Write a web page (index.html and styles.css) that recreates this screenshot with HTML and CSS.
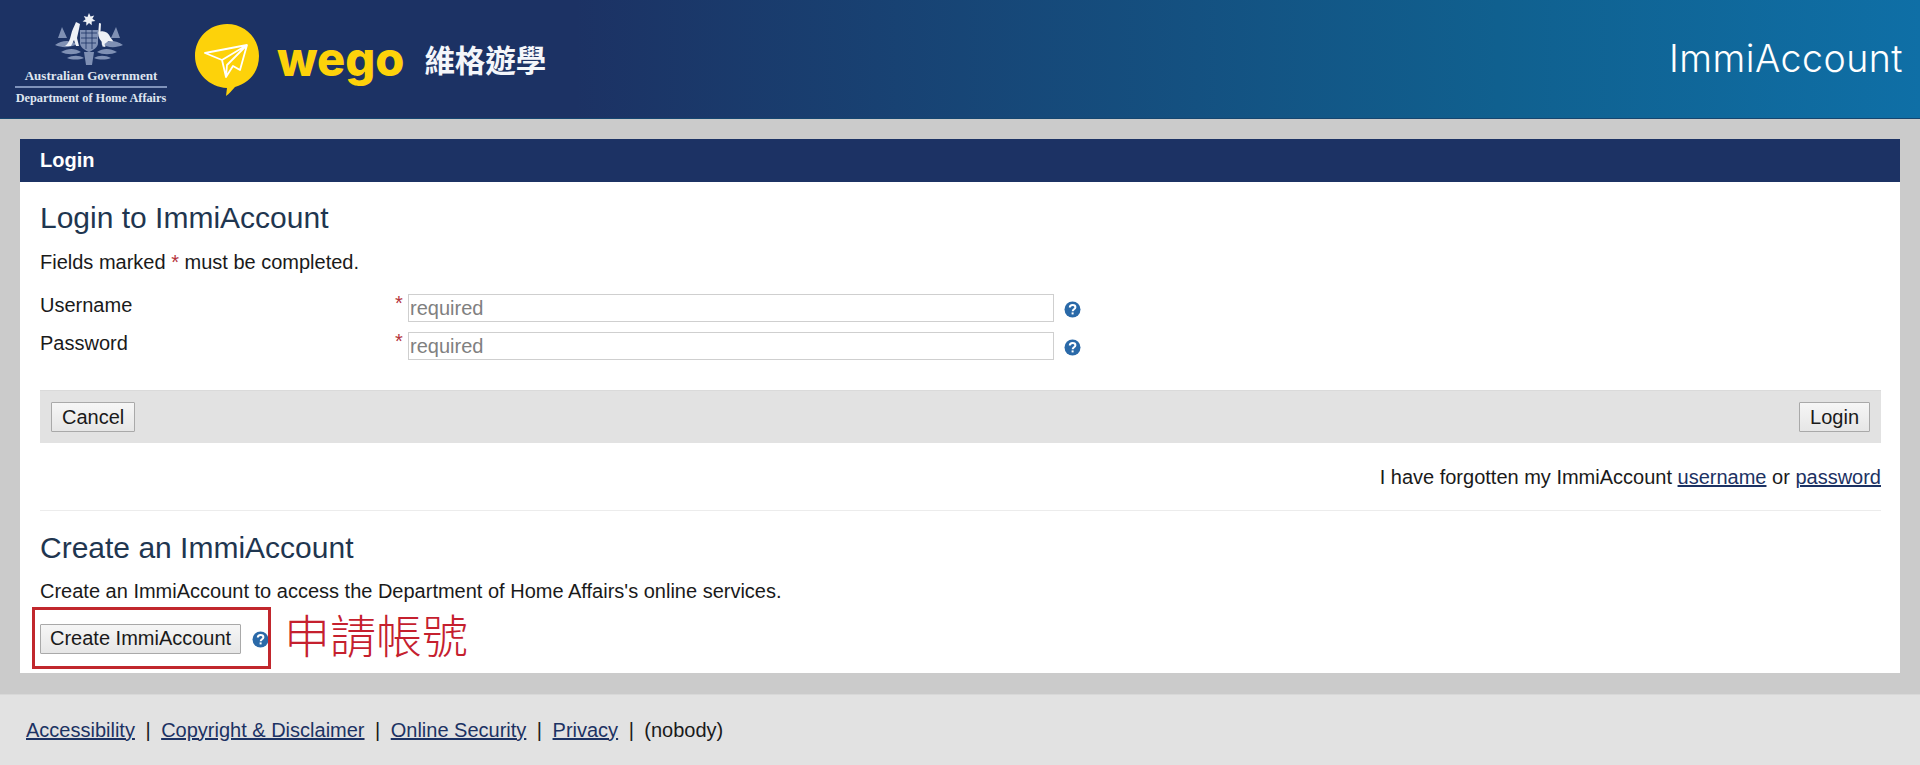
FILE: index.html
```html
<!DOCTYPE html>
<html lang="en">
<head>
    <meta charset="UTF-8">
    <meta name="viewport" content="width=device-width, initial-scale=1.0">
    <title>Login to ImmiAccount</title>
    <link rel="stylesheet" href="styles.css">
</head>
<body>
    <header class="site-header">
        <div class="logos">
            <div class="gov-logo">
                <svg class="crest" width="68" height="54" viewBox="0 0 68 54">
                    <g fill="#7f90b4">
                        <path d="M3 26l4-11 5 11zM56 26l5-11 4 11z"/>
                        <path d="M0 33c7-5 15-5 22-1-7 4-15 4-22 1zM46 32c7-4 15-4 22 1-7 3-15 3-22-1z"/>
                        <path d="M6 40c7-4 14-4 20 0-6 3-14 3-20 0zM42 40c6-4 13-4 20 0-6 3-14 3-20 0z"/>
                        <path d="M12 46c6-3 12-3 17 0-5 2-12 2-17 0zM39 46c5-3 11-3 17 0-5 2-12 2-17 0z"/>
                        <path d="M25 18h18v13c0 4-4 7-9 9-5-2-9-5-9-9z"/>
                        <path d="M29 40h10l-2 13h-6z"/>
                    </g>
                    <path d="M26 21h16M26 26h16M26 31h15M31 18v19M37 18v19" stroke="#1c3264" stroke-width=".8"/>
                    <path d="M34 1l1.600 3.400 3.600-1-1.800 3.300 3 2.300-3.700.5v3.700L34 11l-2.700 2.700v-3.700l-3.700-.5 3-2.300-1.800-3.300 3.600 1z" fill="#eef1f6"/>
                    <path d="M21 10c-2 5-4 8-5 13-1 5-3 9-6 11h6l3-6 2 6h3l-2-8 2-9 1-5z" fill="#eef1f6"/>
                    <path d="M44 11l2 .5-.5 8c4-1 8 1 10 6l3 4-5-.5-4 3 1 3-3-.5-1-5c-3-3-4-7-3-12z" fill="#eef1f6"/>
                </svg>
                <div class="gov-name">Australian Government</div>
                <div class="gov-dept">Department of Home Affairs</div>
            </div>
            <svg class="wego-mark" width="64" height="72" viewBox="0 0 64 72">
                <path d="M32 0c18 0 32 14 32 32 0 15-9 27-24 31-3 3-6 7-9 9l1-8C14 63 0 49 0 32 0 14 14 0 32 0z" fill="#fdd20a"/>
                <path d="M52 21L10 29l17 7 4 17 7-11 7 4zM27 36l25-15M31 53l1-12 20-20" fill="none" stroke="#fff" stroke-width="1.8" stroke-linejoin="round"/>
            </svg>
            <span class="wego-name">wego</span>
            <span class="wego-sub">維格遊學</span>
        </div>
        <div class="app-name">ImmiAccount</div>
    </header>

    <main class="panel">
        <div class="panel-title">Login</div>
        <div class="panel-body">
            <h2 class="heading-first">Login to ImmiAccount</h2>
            <p class="fields-note">Fields marked <span class="req">*</span> must be completed.</p>

            <div class="form-row">
                <label for="username">Username</label>
                <span class="req req-field">*</span>
                <input type="text" id="username" placeholder="required">
                <svg class="help" width="17" height="17" viewBox="0 0 17 17"><use href="#help-icon"/></svg>
            </div>
            <div class="form-row">
                <label for="password">Password</label>
                <span class="req req-field">*</span>
                <input type="password" id="password" placeholder="required">
                <svg class="help" width="17" height="17" viewBox="0 0 17 17"><use href="#help-icon"/></svg>
            </div>

            <div class="button-bar">
                <button type="button">Cancel</button>
                <button type="button">Login</button>
            </div>

            <p class="forgot">I have forgotten my ImmiAccount <a href="#">username</a> or <a href="#">password</a></p>

            <h2 class="heading-second">Create an ImmiAccount</h2>
            <p class="create-note">Create an ImmiAccount to access the Department of Home Affairs's online services.</p>

            <div class="create-row">
                <button type="button">Create ImmiAccount</button>
                <svg class="help" width="17" height="17" viewBox="0 0 17 17"><use href="#help-icon"/></svg>
                <div class="callout-box"></div>
                <div class="callout-text">申請帳號</div>
            </div>
        </div>
    </main>

    <footer class="site-footer">
        <a href="#">Accessibility</a><span class="sep">|</span>
        <a href="#">Copyright &amp; Disclaimer</a><span class="sep">|</span>
        <a href="#">Online Security</a><span class="sep">|</span>
        <a href="#">Privacy</a><span class="sep">|</span>
        <span>(nobody)</span>
    </footer>

    <svg width="0" height="0" class="icon-defs">
        <symbol id="help-icon" viewBox="0 0 17 17">
            <circle cx="8.5" cy="8.5" r="8" fill="#2a69a8"/>
            <path d="M5.800 6.600c0-1.600 1.200-2.600 2.800-2.600s2.800.9 2.800 2.300c0 1.900-2.700 2-2.700 3.900" fill="none" stroke="#fff" stroke-width="2"/>
            <rect x="7.600" y="11.400" width="2" height="2" fill="#fff"/>
        </symbol>
    </svg>
</body>
</html>
```

FILE: styles.css
```css
* { box-sizing: border-box; }
body { margin: 0; height: 765px; overflow: hidden; background: #cbcbcb; color: #1a1a1a; font-family: "Liberation Sans", Arial, sans-serif; font-size: 20px; display: flex; flex-direction: column; }
a { color: #1c3263; }

.site-header { height: 119px; flex: none; display: flex; justify-content: space-between; align-items: center; padding-right: 17px; color: #fff; background: linear-gradient(90deg, #1c3264 0%, #1c3264 30%, #10608f 78%, #0f6fa6 100%); border-bottom: 1px solid #16466f; }
.logos { display: flex; align-items: center; }
.gov-logo { width: 152px; margin-left: 15px; text-align: center; font-family: "Liberation Serif", serif; font-weight: bold; color: #dfe5f0; }
.crest { display: block; margin: 0 0 2px 40px; }
.gov-name { font-size: 13px; line-height: 15px; padding-bottom: 3px; border-bottom: 2px solid #7f93bb; white-space: nowrap; }
.gov-dept { font-size: 12.300px; line-height: 15px; padding-top: 3px; white-space: nowrap; }
.wego-mark { margin-left: 28px; margin-top: 2px; }
.wego-name { margin-left: 18px; font-family: "Inter", sans-serif; font-weight: 800; font-size: 47px; line-height: 60px; color: #fdd20a; }
.wego-sub { margin-left: 20px; font-family: "Noto Sans CJK TC", sans-serif; font-weight: 700; font-size: 30.500px; color: #f4f6fa; }
.app-name { font-family: "Inter", sans-serif; font-weight: 300; font-size: 37.500px; letter-spacing: .5px; margin-bottom: 2px; }

.panel { flex: none; height: 534px; margin: 20px 20px 21px; background: #fff; }
.panel-title { height: 43px; line-height: 42px; padding-left: 20px; background: #1c3264; color: #fff; font-weight: bold; }
.panel-body { padding: 0 19px 0 20px; }
h2 { margin: 0; font-weight: normal; font-size: 30px; line-height: 36px; color: #1f3650; }
p { margin: 0; }
.heading-first { padding-top: 18px; }
.fields-note { margin-top: 14px; line-height: 24px; }
.req { color: #b5333c; }

.form-row { display: flex; align-items: flex-start; height: 38px; }
.fields-note + .form-row { margin-top: 20px; }
.form-row label { width: 355px; line-height: 22px; }
.req-field { width: 13px; line-height: 18px; }
.form-row input { width: 646px; height: 28px; padding: 0 1px; border: 1px solid #cfcfcf; font: inherit; color: #333; }
.form-row input::placeholder { color: #808080; opacity: 1; }
.form-row .help { margin: 7px 0 0 10px; }

.button-bar { display: flex; justify-content: space-between; align-items: center; height: 53px; margin-top: 20px; padding: 0 11px; background: #e2e2e2; border-top: 1px solid #dadada; }
button { height: 30px; padding: 0 9px; background: linear-gradient(#f6f6f6, #e6e6e6); border: 1px solid #a9a9a9; border-radius: 1px; color: #1a1a1a; font: inherit; }
.button-bar button { padding: 0 10px; }

.forgot { margin-top: 23px; padding-bottom: 21px; text-align: right; line-height: 23px; border-bottom: 1px solid #ececec; }
.heading-second { margin-top: 19px; }
.create-note { margin-top: 13px; line-height: 24px; }
.create-row { position: relative; display: flex; align-items: center; margin-top: 20px; height: 31px; }
.create-row .help { margin-left: 11px; margin-top: 1px; }
.callout-box { position: absolute; left: -8px; top: -16px; width: 239px; height: 62px; border: 3px solid #c1272d; }
.callout-text { position: absolute; left: 244px; top: -20px; font-family: "Noto Sans CJK TC", sans-serif; font-weight: 300; font-size: 46px; line-height: 60px; color: #c5202e; white-space: nowrap; }

.site-footer { flex: none; height: 71px; display: flex; align-items: center; padding-left: 26px; background: #e2e2e2; border-top: 1px solid #d8d8d8; white-space: nowrap; }
.sep { margin: 0 10.500px; }
.icon-defs { position: absolute; }
```
